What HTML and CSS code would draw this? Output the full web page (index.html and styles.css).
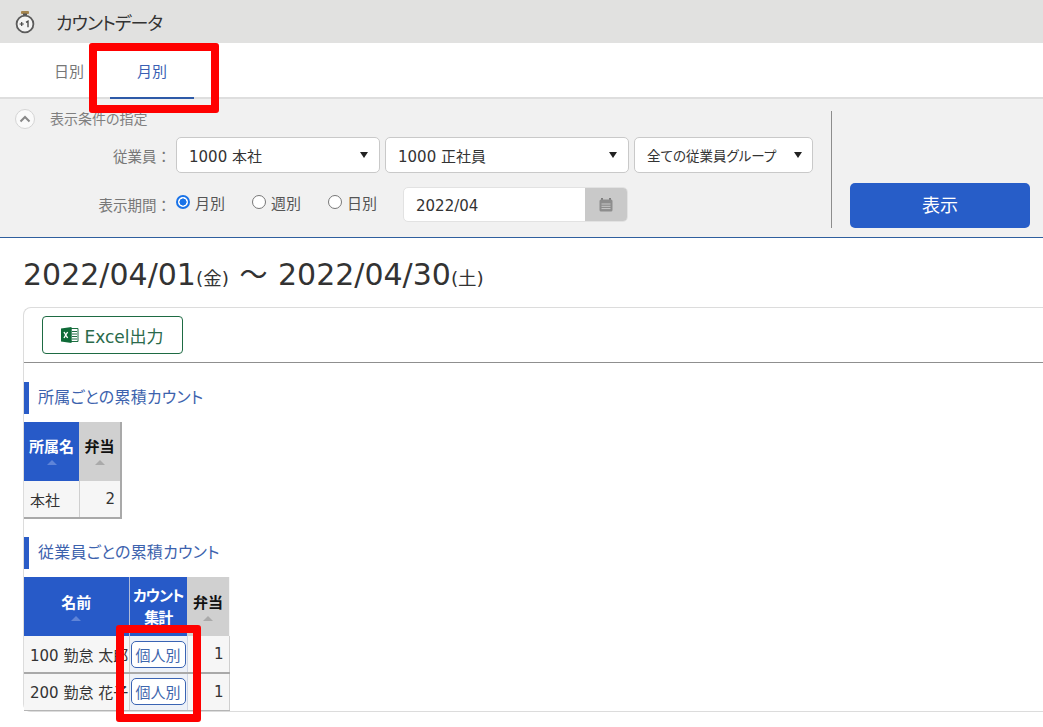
FILE: index.html
```html
<!DOCTYPE html>
<html lang="ja">
<head>
<meta charset="utf-8">
<title>カウントデータ</title>
<link rel="stylesheet" href="styles.css">
</head>
<body>
<div class="page">
  <header class="titlebar">
    <svg class="watch" width="20" height="24" viewBox="0 0 20 24">
      <rect x="6" y="1" width="8" height="3" rx="1" fill="#a5854f"/>
      <path d="M8 3.5h4v2H8z" fill="#555"/>
      <circle cx="10" cy="14" r="8.4" fill="#f4f4f4" stroke="#5b5b5b" stroke-width="1.8"/>
      <path d="M4.6 14h4.2M6.7 11.9v4.2" stroke="#444" stroke-width="1.2" fill="none"/>
      <path d="M11 12.4l2-1.2v6" stroke="#444" stroke-width="1.3" fill="none"/>
    </svg>
    <h1 class="app-title">カウントデータ</h1>
  </header>

  <nav class="tabs">
    <a class="tab">日別</a>
    <a class="tab tab-active">月別</a>
  </nav>

  <section class="filter">
    <div class="filter-main">
      <div class="filter-title">
        <span class="collapse">
          <svg width="12" height="8" viewBox="0 0 12 8"><path d="M1.5 6.5L6 2l4.5 4.5" fill="none" stroke="#888" stroke-width="2"/></svg>
        </span>
        <span class="filter-title-text">表示条件の指定</span>
      </div>
      <div class="filter-row row-employee">
        <label class="row-label">従業員：</label>
        <div class="select select-a"><span>1000 本社</span><i class="caret"></i></div>
        <div class="select select-b"><span>1000 正社員</span><i class="caret"></i></div>
        <div class="select select-c"><span>全ての従業員グループ</span><i class="caret"></i></div>
      </div>
      <div class="filter-row row-period">
        <label class="row-label">表示期間：</label>
        <span class="radio radio-on"><i></i>月別</span>
        <span class="radio"><i></i>週別</span>
        <span class="radio"><i></i>日別</span>
        <div class="date">
          <span class="date-value">2022/04</span>
          <span class="date-addon">
            <svg width="16" height="16" viewBox="0 0 16 16"><path d="M4 1v3M12 1v3" stroke="#7d7d7d" stroke-width="2"/><rect x="1.5" y="2.5" width="13" height="12" rx="1.5" fill="#8d8d8d"/><path d="M3.5 7h9M3.5 9.3h9M3.5 11.6h9" stroke="#c9c9c9" stroke-width="1"/></svg>
          </span>
        </div>
      </div>
    </div>
    <div class="filter-action">
      <button class="show-btn">表示</button>
    </div>
  </section>

  <main class="content">
    <h2 class="range">2022/04/01<small>(金)</small> <span class="tilde">～</span> 2022/04/30<small>(土)</small></h2>
    <div class="card">
      <div class="card-toolbar">
        <button class="excel-btn">
          <svg width="18" height="18" viewBox="0 0 18 18"><path d="M10 2.5h7v13h-7z" fill="#fff" stroke="#1d6f42"/><path d="M11 5.5h5M11 8h5M11 10.5h5M11 13h5" stroke="#1d6f42"/><path d="M0 2.5L10.5 1v16L0 15.5z" fill="#0f6b38"/><path d="M3 6l3.6 6M6.6 6L3 12" stroke="#fff" stroke-width="1.4"/></svg>
          Excel出力
        </button>
      </div>
      <h3 class="section-title first">所属ごとの累積カウント</h3>
      <table class="grid grid-dept">
        <colgroup><col class="w-dept"><col class="w-bento"></colgroup>
        <thead>
          <tr>
            <th>所属名<i class="sort"></i></th>
            <th class="col-gray">弁当<i class="sort sort-dark"></i></th>
          </tr>
        </thead>
        <tbody>
          <tr><td>本社</td><td class="num">2</td></tr>
        </tbody>
      </table>
      <h3 class="section-title second">従業員ごとの累積カウント</h3>
      <table class="grid grid-emp">
        <colgroup><col class="w-name"><col class="w-count"><col class="w-bento"></colgroup>
        <thead>
          <tr>
            <th class="col-name">名前<i class="sort"></i></th>
            <th class="col-count">カウント<br>集計</th>
            <th class="col-gray col-bento2">弁当<i class="sort sort-dark"></i></th>
          </tr>
        </thead>
        <tbody>
          <tr><td class="name-cell">100 勤怠 太郎</td><td class="btn-cell"><button class="person-btn">個人別</button></td><td class="num">1</td></tr>
          <tr><td class="name-cell">200 勤怠 花子</td><td class="btn-cell"><button class="person-btn">個人別</button></td><td class="num">1</td></tr>
        </tbody>
      </table>
    </div>
  </main>

  <div class="mark mark-tab"></div>
  <div class="mark mark-btn"></div>
</div>
</body>
</html>
```
FILE: styles.css
```css
* { box-sizing: border-box; }
html, body { margin: 0; padding: 0; }
body {
  width: 1043px;
  height: 727px;
  overflow: hidden;
  background: #fff;
  color: #333;
  font-family: "DejaVu Sans", "Noto Sans CJK JP", sans-serif;
  font-size: 15px;
  font-feature-settings: "palt";
}
.page { position: relative; width: 1043px; height: 727px; overflow: hidden; }

.titlebar {
  height: 43px;
  background: #e1e1e0;
  display: flex;
  align-items: center;
  padding-left: 15px;
}
.watch { display: block; margin-top: 1px; }
.app-title { margin: 0 0 0 21px; font-size: 18px; font-weight: 400; color: #333; letter-spacing: -1px; }

.tabs {
  height: 56px;
  display: flex;
  padding-left: 43px;
  border-bottom: 2px solid #dedede;
}
.tab {
  height: 56px;
  text-align: center;
  line-height: 58px;
  font-size: 15px;
  color: #777;
}
.tab:first-child { width: 52px; margin-right: 15px; }
.tab-active { width: 84px; color: #3a5fb4; border-bottom: 2px solid #2d5aa8; }

.filter {
  height: 139px;
  background: #f1f1f1;
  border-bottom: 1px solid #2f5f9e;
  display: flex;
}
.filter-main { width: 832px; height: 117px; margin-top: 12px; border-right: 1px solid #8d8d8d; }
.filter-title {
  display: flex;
  align-items: center;
  height: 16px;
  margin-left: 15px;
  font-size: 14px;
  color: #808080;
  gap: 15px;
}
.filter-title-text { margin-top: -3px; }
.collapse {
  width: 20px; height: 20px;
  border-radius: 50%;
  background: #fafafa;
  border: 1px solid #d5d5d5;
  display: flex; align-items: center; justify-content: center;
}
.filter-row { display: flex; align-items: center; }
.row-employee { margin-top: 10px; height: 36px; }
.row-period { margin-top: 14px; height: 35px; }
.row-label { width: 171px; text-align: right; color: #777; font-size: 14.5px; font-feature-settings: normal; }
.select {
  height: 36px;
  background: #fff;
  border: 1px solid #c9c9c9;
  border-radius: 5px;
  display: flex;
  align-items: center;
  justify-content: space-between;
  color: #333;
  margin-right: 5px;
  padding: 0 11px 0 12px;
}
.select-a { width: 204px; margin-left: 5px; }
.select-b { width: 244px; }
.select-c { width: 179px; margin-right: 0; font-size: 13.5px; padding-right: 10px; }
.caret { width: 0; height: 0; border-left: 4.5px solid transparent; border-right: 4.5px solid transparent; border-top: 6px solid #222; }
.radio { display: flex; align-items: center; color: #555; height: 30px; margin-top: -4px; width: 76px; flex: none; }
.row-label + .radio { margin-left: 5px; }
.radio i {
  width: 14px; height: 14px;
  border: 1px solid #777;
  border-radius: 50%;
  background: #fff;
  margin-right: 5px;
  margin-top: -2px;
  flex: none;
}
.radio-on i { border: 2px solid #1a73e8; background: radial-gradient(circle, #1a73e8 0 3.3px, #fff 3.8px); }
.radio:last-of-type { width: 75px; }
.date {
  width: 225px;
  height: 35px;
  background: #fff;
  border: 1px solid #e2e2e2;
  border-radius: 5px;
  display: flex;
  overflow: hidden;
}
.date-value { flex: 1; padding-left: 12px; line-height: 37px; color: #333; }
.date-addon { width: 42px; background: #c9c9c9; display: flex; align-items: center; justify-content: center; }
.filter-action { flex: 1; padding: 84px 0 0 18px; }
.show-btn {
  width: 180px;
  height: 45px;
  background: #275dc8;
  color: #fff;
  border: 0;
  border-radius: 5px;
  font: inherit;
  font-size: 18px;
  line-height: 40px;
  padding: 1px 0 0;
}

.content { padding-left: 23px; }
.range {
  margin: 0;
  height: 69px;
  padding-top: 16px;
  font-size: 30px;
  line-height: 42px;
  font-weight: 400;
  color: #333;
  white-space: nowrap;
}
.range small { font-size: 18.5px; }
.tilde { font-size: 28px; margin: 0 1px; }
.card {
  width: 1100px;
  height: 405px;
  border: 1px solid #dcdcdc;
  border-right: 0;
  border-radius: 8px 0 0 8px;
  background: #fff;
}
.card-toolbar { height: 55px; border-bottom: 1px solid #8f8f8f; padding: 8px 0 0 18px; }
.excel-btn {
  width: 141px;
  height: 38px;
  background: #fff;
  border: 1px solid #1e6b43;
  border-radius: 4px;
  color: #2a6a4b;
  font: inherit;
  font-size: 17px;
  display: flex;
  align-items: center;
  justify-content: center;
  gap: 5px;
  padding: 0;
}
.section-title {
  margin: 0;
  height: 32px;
  line-height: 31px;
  border-left: 5px solid #2a5cc7;
  padding-left: 9px;
  font-size: 16px;
  font-weight: 400;
  color: #3c62ad;
  letter-spacing: .2px;
}
.section-title.first { margin-top: 19px; }
.section-title.second { margin-top: 18px; }
.grid { border-collapse: collapse; table-layout: fixed; background: #f6f6f6; font-size: 15px; color: #333; margin-top: 8px; }
.grid-dept { width: 97px; }
.grid-emp { width: 205px; }
.w-dept { width: 55px; }
.w-bento { width: 42px; }
.w-name { width: 105px; }
.w-count { width: 58px; }
.grid th {
  background: #275ac8;
  color: #fff;
  height: 59px;
  font-size: 15px;
  font-weight: 700;
  text-align: center;
  vertical-align: top;
  line-height: 22px;
  padding: 6px 0 0;
}
.grid td { padding: 0 6px; border-bottom: 2px solid #a9a9a9; white-space: nowrap; overflow: hidden; }
.grid-dept td { height: 37px; border-right: 1px solid #cfcfcf; }
.grid-dept td:last-child { border-right: 2px solid #a9a9a9; }
.grid-dept th { padding-top: 14px; }
.grid th.col-gray { background: #d0d0d0; color: #111; }
.grid-dept th.col-gray { border-right: 2px solid #a9a9a9; }
.col-name { border-right: 1px solid #aebad8; }
.grid-emp th { padding-top: 8px; }
.grid-emp th.col-count { letter-spacing: -1px; }
.grid-emp th.col-name, .grid-emp th.col-bento2 { padding-top: 15px; }
.grid-emp td { height: 37px; }
.grid-emp tr:last-child td { height: 37px; border-bottom: 1px solid #b5b5b5; }
.grid-emp td.num { border-right: 1px solid #cfcfcf; }
.name-cell { border-right: 1px solid #cfcfcf; }
.grid .btn-cell { background: #edf1f8; padding: 0 2px 0 1px; border-right: 1px solid #cfd6e6; }
.grid .num { text-align: right; padding-right: 5px; }
.sort {
  display: block;
  width: 0; height: 0;
  margin: 2px auto 0;
  border-left: 5px solid transparent;
  border-right: 5px solid transparent;
  border-bottom: 5px solid #5f84d8;
}
.sort-dark { border-bottom-color: #aaa; }
.person-btn {
  display: block;
  width: 55px;
  height: 27px;
  background: #fff;
  border: 1px solid #3a64b4;
  border-radius: 5px;
  color: #3f67ae;
  font: inherit;
  font-size: 15px;
  padding: 0;
}

.mark { position: absolute; border: 8px solid #f00; border-radius: 3px; }
.mark-tab { left: 89px; top: 43px; width: 130px; height: 70px; }
.mark-btn { left: 116px; top: 625px; width: 85px; height: 97px; }
```
